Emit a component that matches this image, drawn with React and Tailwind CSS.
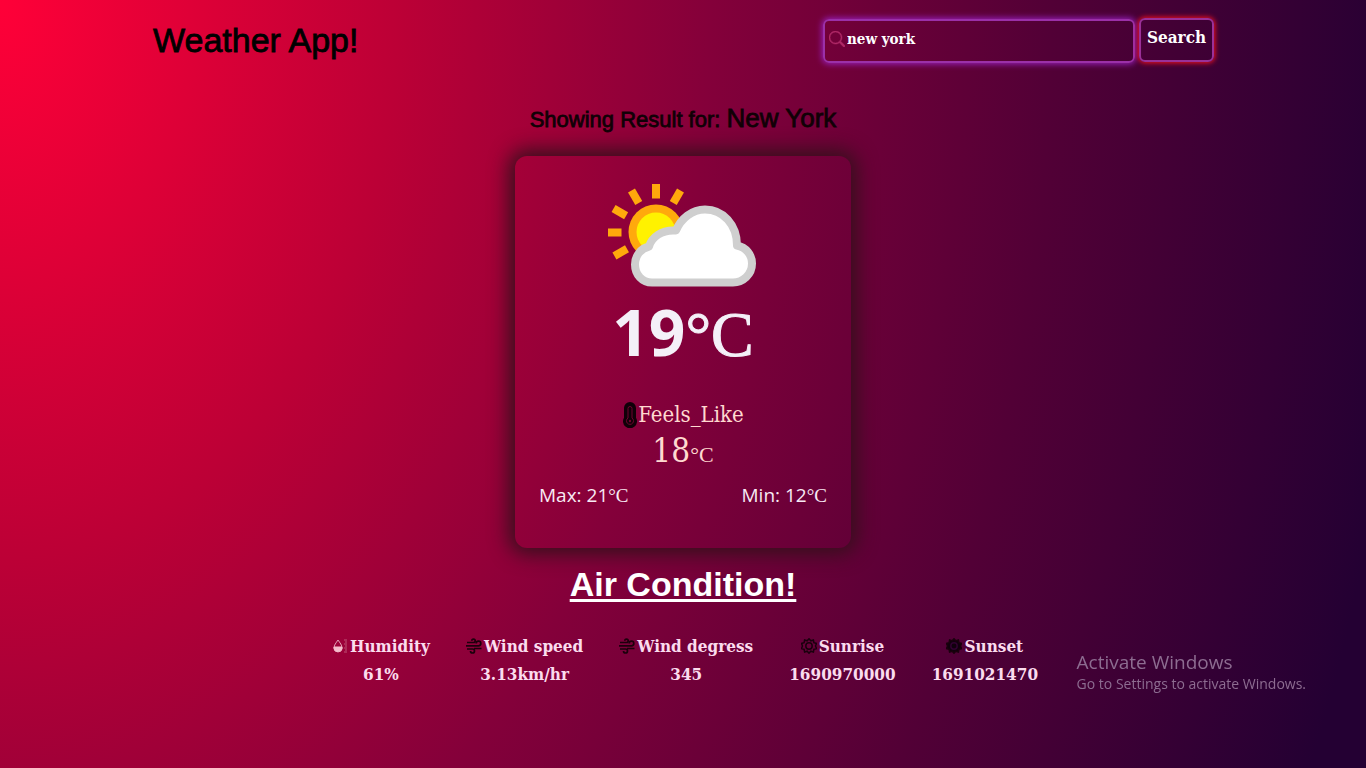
import { BsSearch } from "react-icons/bs";

const serif = "font-['DejaVu_Serif_Condensed','DejaVu_Serif',serif]";
const segoe = "font-['Open_Sans','Noto_Sans',sans-serif]";

function PartlyCloudy() {
  return (
    <svg className="h-[104px] w-[150px]" viewBox="2 0 150 104" aria-hidden="true">
      <g fill="#ffa90c">
        <circle cx="50" cy="48" r="27.500" />
        <rect x="46" y="0" width="8" height="14.500" />
        <rect x="46" y="0" width="8" height="14.500" transform="rotate(30 50 49)" />
        <rect x="46" y="0" width="8" height="14.500" transform="rotate(-30 50 49)" />
        <rect x="46" y="0" width="8" height="14.500" transform="rotate(-60 50 49)" />
        <rect x="2" y="44.500" width="13.500" height="8" />
        <rect x="46" y="0" width="8" height="14.500" transform="rotate(-120 50 48)" />
      </g>
      <circle cx="50" cy="48" r="19.500" fill="#fff200" />
      <path
        d="M46 98.500c-10 0-17-8-17-18 0-9 6-16 14-18 3-10 13-16 24-16h3c5-12 16-21 29-21 18 0 32 15 32 36 9 2 15 9 15 18 0 11-9 19-19 19z"
        fill="#fff"
        stroke="#cfcfcf"
        strokeWidth="8"
        strokeLinejoin="round"
      />
    </svg>
  );
}

function Thermometer() {
  return (
    <svg className="h-[26px] w-4" viewBox="0 0 16 26" fill="none" aria-hidden="true">
      <path d="M3 6a5 5 0 0 1 10 0v10a6 6 0 1 1-10 0z" fill="#100008" stroke="#100008" strokeWidth="2" />
      <path d="M6 6.500a2 2 0 0 1 4 0v9.500a3.500 3.500 0 1 1-4 0z" stroke="#70002f" />
      <circle cx="8" cy="19" r="1.200" fill="#70002f" />
    </svg>
  );
}

function Drop() {
  return (
    <svg className="h-4 w-4" viewBox="0 0 16 16" fill="none" aria-hidden="true">
      <path d="M6 2C4 5 2 7 2 10a4 4 0 0 0 8 0c0-3-2-5-4-8z" stroke="#e3a0b5" />
      <path d="M2 9h8a4 4 0 0 1-8 1z" fill="#f4bccb" stroke="#f4bccb" />
      <path d="M12 2h3M13 4h2M12 6h3M13 8h2M12 10h3M13 12h2M12 14h3" stroke="#bd5577" />
    </svg>
  );
}

function Sun({ filled }) {
  return (
    <svg className="h-4 w-4" viewBox="0 0 16 16" fill="none" stroke="#1a000d" aria-hidden="true">
      <path d="m8 .8 1.800 2 2.600-.8.500 2.700 2.600.8-1 2.500 1 2.500-2.600.8-.5 2.700-2.600-.8L8 15.200l-1.800-2-2.600.8-.5-2.700-2.600-.8 1-2.500-1-2.500 2.600-.8.500-2.700 2.600.8z" fill={filled ? "#10000d" : "none"} strokeWidth="1.500" />
      <circle cx="8" cy="8" r="3.200" strokeWidth="1.500" stroke={filled ? "#30002f" : "#1a000d"} />
    </svg>
  );
}

function Wind() {
  return (
    <svg className="h-4 w-4" viewBox="0 0 16 16" fill="none" stroke="#1c000c" strokeWidth="1.700" aria-hidden="true">
      <path d="M1 4.500h6.500a1.700 1.700 0 1 0-1.700-1.700" />
      <path d="M0 7.800h12.500a2.300 2.300 0 1 0-2.300-2.300" />
      <path d="M1 11h5.500a2 2 0 1 1-2 2M8 10.500h7.500" />
    </svg>
  );
}

const stats = [
  { name: "Humidity", value: "61%", icon: <Drop /> },
  { name: "Wind speed", value: "3.13km/hr", icon: <Wind /> },
  { name: "Wind degress", value: "345", icon: <Wind /> },
  { name: "Sunrise", value: "1690970000", icon: <Sun /> },
  { name: "Sunset", value: "1691021470", icon: <Sun filled /> },
];

export default function App() {
  return (
    <div className="flex min-h-screen flex-col bg-[radial-gradient(104%_260%_at_0_0,#ff0038_0%,#bc0036_28%,#84003a_50%,#520036_74%,#240033_100%)] font-['Liberation_Sans',Arial,sans-serif]">
      <header className="flex items-start justify-between pt-[18px] pr-[152px] pl-[153px]">
        <h1 className="text-[34px] leading-[44px] font-normal text-black [-webkit-text-stroke:0.8px_black]">Weather App!</h1>
        <form className={`flex gap-1 ${serif}`} onSubmit={(e) => e.preventDefault()}>
          <label className="mt-px flex h-11 w-[312px] items-center rounded-md border-2 border-[#9b30a8] pb-1 pl-1 shadow-[0_0_6px_1px_#9a20c0]">
            <BsSearch className="h-4 w-4 shrink-0 stroke-[0.5] stroke-[#b02a68] text-[#b02a68]" aria-hidden="true" />
            <input
              aria-label="City"
              defaultValue="new york"
              className="ml-0.5 w-full min-w-0 bg-transparent text-[15px] font-bold text-white outline-none"
            />
          </label>
          <button type="submit" className="h-11 w-[75px] rounded-md border-2 border-[#9b3098] pb-1 text-[17px] font-bold text-white shadow-[0_0_5px_1px_#f01020]">
            Search
          </button>
        </form>
      </header>

      <main className="flex flex-col items-center pt-[39px]">
        <h2 className="text-[22px] leading-8 font-normal text-[#100006] [-webkit-text-stroke:0.8px_#100006]">
          Showing Result for: <span className="text-[26px]">New York</span>
        </h2>

        <section className="mt-5 flex h-[392px] w-[336px] flex-col items-center rounded-xl px-6 pt-7 shadow-[0_0_20px_6px_#35101c]">
          <PartlyCloudy />
          <p className="mt-1 text-[64px] leading-20 text-[#f4f0f8]">
            <span className={`font-bold ${segoe}`}>19</span>
            <span className="font-['Liberation_Serif',serif] [-webkit-text-stroke:1px_#f4f0f8]">°C</span>
          </p>
          <div className={`mt-6 flex items-center text-[22px] leading-8 text-[#ffd9d0] ${serif}`}>
            <Thermometer />
            <span>Feels_Like</span>
          </div>
          <p className={`text-[33px] leading-10 text-[#ffd9d0] ${serif}`}>
            18<span className="font-['Liberation_Serif',serif] text-[22px]">°C</span>
          </p>
          <div className={`mt-0.5 flex w-full justify-between text-[19px] leading-9 text-[#f8eaf4] ${segoe}`}>
            <p>Max: 21<span className="font-['Liberation_Serif',serif]">°C</span></p>
            <p>Min: 12<span className="font-['Liberation_Serif',serif]">°C</span></p>
          </div>
        </section>

        <h2 className="mt-4 text-[34px] leading-10 font-bold text-white underline decoration-[3px] underline-offset-3">Air Condition!</h2>

        <dl className={`mt-7 flex gap-9 pl-1 text-[17px] leading-7 font-bold text-[#fbdcee] ${serif}`}>
          {stats.map((s) => (
            <div key={s.name} className="flex flex-col items-center">
              <dt className="flex items-center gap-0.5">{s.icon}{s.name}</dt>
              <dd>{s.value}</dd>
            </div>
          ))}
        </dl>
      </main>

      <aside className={`fixed right-[60px] bottom-[74px] text-[#8d6c91] ${segoe}`}>
        <p className="text-[19px] leading-6">Activate Windows</p>
        <p className="text-sm leading-5">Go to Settings to activate Windows.</p>
      </aside>
    </div>
  );
}
